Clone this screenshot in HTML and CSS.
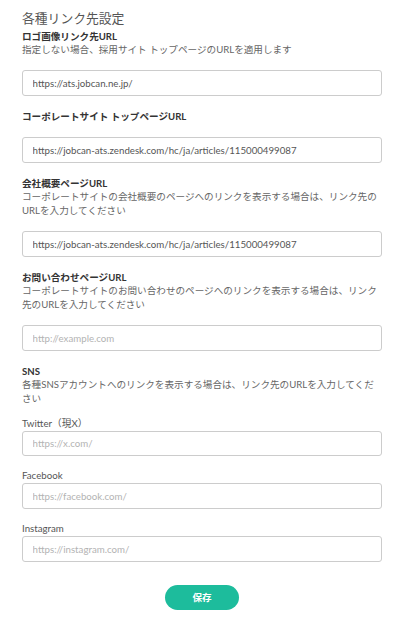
FILE: index.html
```html
<!DOCTYPE html>
<html lang="ja">
<head>
<meta charset="utf-8">
<title>各種リンク先設定</title>
<link rel="stylesheet" href="styles.css">
</head>
<body>
<div class="page">
  <h2 class="title">各種リンク先設定</h2>

  <div class="field">
    <div class="label">ロゴ画像リンク先URL</div>
    <div class="desc">指定しない場合、採用サイト トップページのURLを適用します</div>
    <input class="input" type="text" value="https://ats.jobcan.ne.jp/">
  </div>

  <div class="field">
    <div class="label">コーポレートサイト トップページURL</div>
    <input class="input" type="text" value="https://jobcan-ats.zendesk.com/hc/ja/articles/115000499087">
  </div>

  <div class="field">
    <div class="label">会社概要ページURL</div>
    <div class="desc">コーポレートサイトの会社概要のページへのリンクを表示する場合は、リンク先のURLを入力してください</div>
    <input class="input" type="text" value="https://jobcan-ats.zendesk.com/hc/ja/articles/115000499087">
  </div>

  <div class="field">
    <div class="label">お問い合わせページURL</div>
    <div class="desc">コーポレートサイトのお問い合わせのページへのリンクを表示する場合は、リンク先のURLを入力してください</div>
    <input class="input" type="text" placeholder="http://example.com">
  </div>

  <div class="field sns">
    <div class="label">SNS</div>
    <div class="desc">各種SNSアカウントへのリンクを表示する場合は、リンク先のURLを入力してください</div>
    <div class="subs">
      <div class="sub">
        <label class="sublabel">Twitter（現X）</label>
        <input class="input" type="text" placeholder="https://x.com/">
      </div>
      <div class="sub">
        <label class="sublabel">Facebook</label>
        <input class="input" type="text" placeholder="https://facebook.com/">
      </div>
      <div class="sub">
        <label class="sublabel">Instagram</label>
        <input class="input" type="text" placeholder="https://instagram.com/">
      </div>
    </div>
  </div>

  <div class="actions">
    <button class="save" type="button">保存</button>
  </div>
</div>
</body>
</html>
```

FILE: styles.css
```css
html, body {
  margin: 0;
  padding: 0;
  background: #fff;
}

body {
  font-family: Lato, "Noto Sans CJK JP", sans-serif;
  font-size: 9.6px;
  line-height: 1.4;
  color: #555;
}

.page {
  width: 360px;
  padding: 8.5px 21px 0 22px;
  display: flex;
  flex-direction: column;
}

.title {
  margin: 0 0 3px;
  font-size: 12.8px;
  font-weight: normal;
  line-height: 18px;
  color: #555;
}

.field {
  display: flex;
  flex-direction: column;
  margin-bottom: 14px;
}

.label {
  font-weight: bold;
  color: #333;
}

.desc {
  color: #666;
}

.input {
  box-sizing: border-box;
  width: 360px;
  height: 25.6px;
  margin: 14px 0 0;
  padding: 0 9.6px;
  border: 1px solid #ccc;
  border-radius: 3px;
  font-family: Lato, "Noto Sans CJK JP", sans-serif;
  font-size: 9.7px;
  color: #555;
  background: #fff;
  outline: none;
}

.input::placeholder {
  color: #b3b3b3;
}

.subs {
  display: flex;
  flex-direction: column;
  gap: 13.2px;
  margin-top: 11.6px;
}

.sub {
  display: flex;
  flex-direction: column;
}

.sublabel {
  color: #555;
  font-size: 9.7px;
  line-height: 13.4px;
}

.sub .input {
  margin-top: 0.6px;
}

.sns {
  margin-bottom: 0;
}

.actions {
  display: flex;
  justify-content: center;
  margin-top: 23.2px;
}

.save {
  width: 74px;
  height: 25px;
  border: none;
  border-radius: 13px;
  background: #1dbc9c;
  color: #fff;
  font-family: Lato, "Noto Sans CJK JP", sans-serif;
  font-size: 9.6px;
  font-weight: bold;
  padding: 0;
}
```
